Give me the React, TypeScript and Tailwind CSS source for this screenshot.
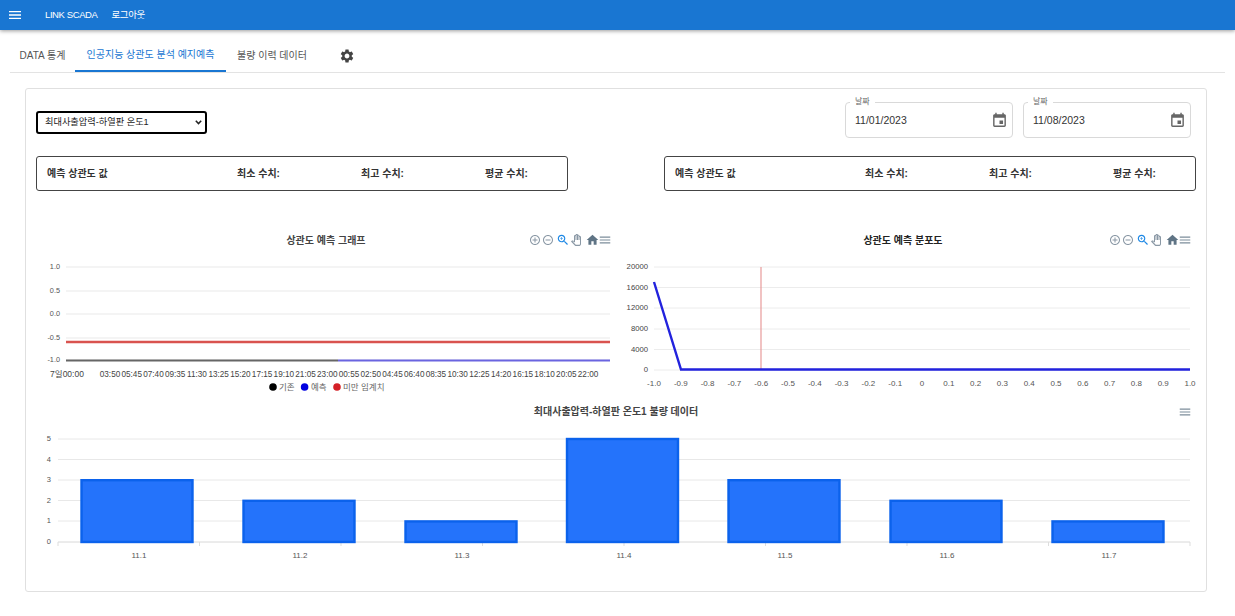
const FONT = '"Liberation Sans","Noto Sans CJK KR",sans-serif';

const times = ['03:50','05:45','07:40','09:35','11:30','13:25','15:20','17:15','19:10','21:05','23:00','00:55','02:50','04:45','06:40','08:35','10:30','12:25','14:20','16:15','18:10','20:05','22:00'];

function Ico({ x, y, s, fill = '#6e8192', d }: { x: number; y: number; s: number; fill?: string; d: string }) {
  return (
    <svg x={x} y={y} width={s} height={s} viewBox="0 0 24 24">
      <path d={d} fill={fill} />
    </svg>
  );
}

const PLUS = 'M13 7h-2v4H7v2h4v4h2v-4h4v-2h-4V7zm-1-5C6.48 2 2 6.48 2 12s4.48 10 10 10 10-4.48 10-10S17.52 2 12 2zm0 18c-4.41 0-8-3.59-8-8s3.59-8 8-8 8 3.59 8 8-3.59 8-8 8z';
const MINUS = 'M7 11v2h10v-2H7zm5-9C6.48 2 2 6.48 2 12s4.48 10 10 10 10-4.48 10-10S17.52 2 12 2zm0 18c-4.41 0-8-3.59-8-8s3.59-8 8-8 8 3.59 8 8-3.59 8-8 8z';
const ZOOM = 'M15.5 14h-.79l-.28-.27C15.41 12.59 16 11.11 16 9.5 16 5.91 13.09 3 9.5 3S3 5.91 3 9.5 5.91 16 9.5 16c1.61 0 3.09-.59 4.23-1.57l.27.28v.79l5 4.99L20.49 19l-4.99-5zm-6 0C7.01 14 5 11.99 5 9.5S7.01 5 9.5 5 14 7.01 14 9.5 11.99 14 9.5 14zM12 10h-2v2H9v-2H7V9h2V7h1v2h2v1z';
const HAND = 'M18 24h-6.55c-1.08 0-2.14-.45-2.89-1.23l-7.56-7.78 2.01-1.75c.49-.43 1.2-.51 1.77-.2L7 14.07V4.5a2.5 2.5 0 0 1 3.01-2.45A2.5 2.5 0 0 1 14.9 1.5a2.5 2.5 0 0 1 3.1 2.43V4a2.5 2.5 0 0 1 3 2.45V19.5c0 2.5-1.5 4.5-3 4.5zM4 14.6l6 6.2c.37.38.9.6 1.45.6H18c.6 0 1-1 1-2V6.5a.5.5 0 0 0-1 0V12h-2V3.5a.5.5 0 0 0-1 0V12h-2V2.5a.5.5 0 0 0-1 0V12h-2V4.5a.5.5 0 0 0-1 0V17l-4.5-2.6z';
const HOME = 'M10 20v-6h4v6h5v-8h3L12 3 2 12h3v8z';
const MENU = 'M3 18h18v-2H3v2zm0-5h18v-2H3v2zm0-7v2h18V6H3z';
const EVENT = 'M17 12h-5v5h5v-5zM16 1v2H8V1H6v2H5c-1.11 0-1.99.9-1.99 2L3 19c0 1.1.89 2 2 2h14c1.1 0 2-.9 2-2V5c0-1.1-.9-2-2-2h-1V1h-2zm3 18H5V8h14v11z';
const GEAR = 'M19.14 12.94c.04-.3.06-.61.06-.94 0-.32-.02-.64-.07-.94l2.03-1.58c.18-.14.23-.41.12-.61l-1.92-3.32c-.12-.22-.37-.29-.59-.22l-2.39.96c-.5-.38-1.03-.7-1.62-.94l-.36-2.54c-.04-.24-.24-.41-.48-.41h-3.84c-.24 0-.43.17-.47.41l-.36 2.54c-.59.24-1.13.57-1.62.94l-2.39-.96c-.22-.08-.47 0-.59.22L2.74 8.87c-.12.21-.08.47.12.61l2.03 1.58c-.05.3-.09.63-.09.94s.02.64.07.94l-2.03 1.58c-.18.14-.23.41-.12.61l1.92 3.32c.12.22.37.29.59.22l2.39-.96c.5.38 1.03.7 1.62.94l.36 2.54c.05.24.24.41.48.41h3.84c.24 0 .44-.17.47-.41l.36-2.54c.59-.24 1.13-.56 1.62-.94l2.39.96c.22.08.47 0 .59-.22l1.92-3.32c.12-.22.07-.47-.12-.61l-2.01-1.58zM12 15.6c-1.98 0-3.6-1.62-3.6-3.6s1.62-3.6 3.6-3.6 3.6 1.62 3.6 3.6-1.62 3.6-3.6 3.6z';

function Toolbar({ x }: { x: number }) {
  return (
    <g>
      <Ico x={x} y={234} s={12} fill="#8a98a5" d={PLUS} />
      <Ico x={x + 13} y={234} s={12} fill="#8a98a5" d={MINUS} />
      <Ico x={x + 27} y={233} s={14} fill="#1e88e5" d={ZOOM} />
      <Ico x={x + 41.5} y={234} s={12} fill="#8a98a5" d={HAND} />
      <Ico x={x + 56.5} y={233} s={14} fill="#5f7485" d={HOME} />
      <Ico x={x + 69} y={233} s={14} fill="#7d8d9b" d={MENU} />
    </g>
  );
}

function LeftChart() {
  const gy = [267, 291, 314, 338, 360];
  const yl = ['1.0', '0.5', '0.0', '-0.5', '-1.0'];
  return (
    <svg width={576} height={175} viewBox="36 225 576 175" className="block shrink-0">
      <text x={326} y={243.5} textAnchor="middle" fontSize={10} fontWeight={600} fill="#444">상관도 예측 그래프</text>
      <Toolbar x={529} />
      {gy.map((y, i) => (
        <g key={y}>
          <line x1={66} x2={610} y1={y} y2={y} stroke="#e9e9e9" />
          <text x={60} y={y + 1.5} textAnchor="end" fontSize={7.3} fill="#555">{yl[i]}</text>
        </g>
      ))}
      <line x1={66} x2={610} y1={342} y2={342} stroke="#d9534f" strokeWidth={2.4} />
      <line x1={66} x2={338} y1={360.5} y2={360.5} stroke="#666" strokeWidth={2} />
      <line x1={338} x2={610} y1={360.5} y2={360.5} stroke="#6a64e0" strokeWidth={2} />
      <text x={67} y={377} textAnchor="middle" fontSize={8.5} fill="#444">7일00:00</text>
      {times.map((t, i) => (
        <text key={i} x={110 + i * 21.73} y={377} textAnchor="middle" fontSize={8.2} fill="#444">{t}</text>
      ))}
      <circle cx={273} cy={387} r={3.8} fill="#000" />
      <text x={279} y={390} fontSize={8.5} fill="#666">기존</text>
      <circle cx={304.6} cy={387} r={3.8} fill="#0000e0" />
      <text x={311} y={390} fontSize={8.5} fill="#666">예측</text>
      <circle cx={337} cy={387} r={3.8} fill="#d42027" />
      <text x={343} y={390} fontSize={8.5} fill="#666">미만 임계치</text>
    </svg>
  );
}

function RightChart() {
  const gy = [267, 287.5, 308, 329, 349.5, 370];
  const yl = ['20000', '16000', '12000', '8000', '4000', '0'];
  const xl = ['-1.0','-0.9','-0.8','-0.7','-0.6','-0.5','-0.4','-0.3','-0.2','-0.1','0','0.1','0.2','0.3','0.4','0.5','0.6','0.7','0.8','0.9','1.0'];
  return (
    <svg width={576} height={175} viewBox="620 225 576 175" className="block shrink-0">
      <text x={903} y={243.5} textAnchor="middle" fontSize={10} fontWeight={700} fill="#222">상관도 예측 분포도</text>
      <Toolbar x={1109} />
      {gy.map((y, i) => (
        <g key={y}>
          <line x1={654} x2={1190} y1={y} y2={y} stroke="#ececec" />
          <text x={648} y={y + 2} textAnchor="end" fontSize={7.7} fill="#444">{yl[i]}</text>
        </g>
      ))}
      <line x1={761} x2={761} y1={267} y2={370} stroke="#e89a9a" strokeWidth={1.2} />
      <polyline points="654,282 681,369.5 1190,369.5" fill="none" stroke="#2222dd" strokeWidth={2.4} />
      {xl.map((t, i) => (
        <text key={i} x={654 + i * 26.8} y={386} textAnchor="middle" fontSize={8} fill="#555">{t}</text>
      ))}
    </svg>
  );
}

function BarChart() {
  const gy = [439, 459.5, 480, 500.5, 521, 542];
  const bars = [
    [81.5, 3, '11.1', 139], [243.5, 2, '11.2', 300], [405.5, 1, '11.3', 462], [567, 5, '11.4', 624],
    [728.5, 3, '11.5', 785], [890.5, 2, '11.6', 947], [1052.5, 1, '11.7', 1109],
  ] as const;
  return (
    <svg width={1160} height={175} viewBox="36 400 1160 175" className="block">
      <text x={616} y={415} textAnchor="middle" fontSize={10} fontWeight={600} fill="#444">최대사출압력-하열판 온도1 불량 데이터</text>
      <Ico x={1178} y={405} s={14} fill="#7d8d9b" d={MENU} />
      {gy.map((y, i) => (
        <g key={y}>
          <line x1={58} x2={1190} y1={y} y2={y} stroke={i === 5 ? '#d8d8d8' : '#e8e8e8'} />
          <text x={51} y={y + 2} textAnchor="end" fontSize={7.5} fill="#555">{5 - i}</text>
        </g>
      ))}
      {Array.from({ length: 9 }, (_, i) => (
        <line key={i} x1={58 + i * 141.5} x2={58 + i * 141.5} y1={542} y2={546} stroke="#ddd" />
      ))}
      {bars.map(([x, v, l, c]) => (
        <g key={l}>
          <rect x={x} y={542 - v * 20.6} width={111} height={v * 20.6} fill="#2473fb" stroke="#0b62ec" strokeWidth={2.4} />
          <text x={c} y={558} textAnchor="middle" fontSize={8} fill="#555">{l}</text>
        </g>
      ))}
    </svg>
  );
}

function DateField({ value }: { value: string }) {
  return (
    <div className="relative flex h-[36px] w-[168px] items-center justify-between rounded border border-[#d9d9d9] pl-[9px] pr-[4px]">
      <span className="absolute left-[4px] top-[-6px] bg-white px-[5px] text-[8px] leading-[10px] text-[#666]">날짜</span>
      <span className="pt-[1px] text-[10.5px] text-[#333]">{value}</span>
      <svg width="17" height="17" viewBox="0 0 24 24"><path d={EVENT} fill="#666" /></svg>
    </div>
  );
}

function StatBox() {
  return (
    <div className="flex h-[35px] w-[532px] items-center rounded-[3px] border border-[#444] pl-[10px] text-[10px] font-semibold text-[#333]">
      <span className="w-[190px]">예측 상관도 값</span>
      <span className="w-[124px]">최소 수치:</span>
      <span className="w-[124px]">최고 수치:</span>
      <span>평균 수치:</span>
    </div>
  );
}

export default function App() {
  return (
    <div className="min-h-[616px] bg-white" style={{ fontFamily: FONT }}>
      <header className="flex h-[30px] items-center bg-[#1976d2] pl-[7px] text-[9.5px] tracking-[-0.4px] text-white shadow-[0_1px_4px_rgba(0,0,0,0.4)]">
        <svg width="16" height="16" viewBox="0 0 24 24" className="mr-[22px]"><path d={MENU} fill="#fff" /></svg>
        <span className="mr-[14px] pt-[1px]">LINK SCADA</span>
        <span className="pt-[1px]">로그아웃</span>
      </header>

      <nav className="mx-[10px] flex h-[43px] items-stretch border-b border-[#e3e3e3] text-[10px] text-[#555]">
        <div className="flex w-[65px] items-center justify-center pt-[8px]">DATA 통계</div>
        <div className="flex w-[151px] items-center justify-center border-b-2 border-[#1976d2] pt-[8px] text-[#1976d2]">인공지능 상관도 분석 예지예측</div>
        <div className="flex w-[92px] items-center justify-center pt-[8px]">불량 이력 데이터</div>
        <div className="ml-[21px] flex items-center pt-[10px]">
          <svg width="16" height="16" viewBox="0 0 24 24"><path d={GEAR} fill="#444" /></svg>
        </div>
      </nav>

      <main className="ml-[25px] mr-[28px] mt-[15px] h-[504px] rounded-[3px] border border-[#e0e0e0] px-[10px] pt-[13px]">
        <div className="flex items-start justify-between">
          <div className="relative mt-[9px]">
            <select className="block h-[23px] w-[171px] appearance-none rounded-[3px] border-2 border-black bg-white pl-[7px] pt-[1px] text-[9.2px] text-[#222]" defaultValue="a">
              <option value="a">최대사출압력-하열판 온도1</option>
            </select>
            <svg width="7" height="5" viewBox="0 0 7 5" className="pointer-events-none absolute right-[5px] top-[9px]">
              <path d="M0.8 0.8L3.5 3.6L6.2 0.8" fill="none" stroke="#222" strokeWidth="1.5" />
            </svg>
          </div>
          <div className="mr-[5px] flex gap-[10px]">
            <DateField value="11/01/2023" />
            <DateField value="11/08/2023" />
          </div>
        </div>

        <div className="mt-[18px] flex justify-between">
          <StatBox />
          <StatBox />
        </div>

        <div className="mt-[34px] flex gap-[8px]">
          <LeftChart />
          <RightChart />
        </div>

        <BarChart />
      </main>
    </div>
  );
}
